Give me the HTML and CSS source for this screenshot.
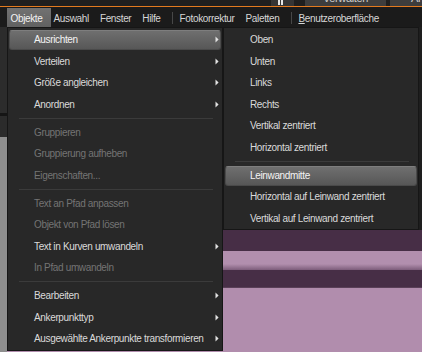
FILE: index.html
```html
<!DOCTYPE html>
<html lang="de">
<head>
<meta charset="utf-8">
<title>Objekte Menü</title>
<link rel="stylesheet" href="styles.css">
</head>
<body>
<div class="titlebar">
  <div class="tb-spacer"></div>
  <div class="tb-btn"><span class="bar"></span><span class="bar"></span></div>
  <div class="tb-tab tab-verwalten"><span>Verwalten</span></div>
  <div class="tb-tab tab-anpassen"><span>Anpassen</span></div>
</div>
<div class="accent"></div>
<nav class="menubar">
  <span class="mb-item open">Objekte</span>
  <span class="mb-item">Auswahl</span>
  <span class="mb-item">Fenster</span>
  <span class="mb-item">Hilfe</span>
  <span class="mb-sep"></span>
  <span class="mb-item">Fotokorrektur</span>
  <span class="mb-item">Paletten</span>
  <span class="mb-sep"></span>
  <span class="mb-item"><u>B</u>enutzeroberfläche</span>
</nav>
<div class="workspace">
  <div class="side">
    <div class="side-top"></div>
    <div class="side-line"></div>
    <div class="side-mid"></div>
    <div class="side-gray"></div>
  </div>
  <div class="canvas">
    <div class="canvas-top"></div>
    <div class="band-dark"></div>
    <div class="band-light"></div>
    <div class="band-dark2"></div>
    <div class="band-light2"></div>
  </div>

  <ul class="menu main">
    <li class="item active"><span class="label">Ausrichten</span><svg class="arrow" viewBox="0 0 4 7" width="4" height="7"><polygon points="0.5,0.5 3.6,3.5 0.5,6.5"/></svg></li>
    <li class="item"><span class="label">Verteilen</span><svg class="arrow" viewBox="0 0 4 7" width="4" height="7"><polygon points="0.5,0.5 3.6,3.5 0.5,6.5"/></svg></li>
    <li class="item"><span class="label">Größe angleichen</span><svg class="arrow" viewBox="0 0 4 7" width="4" height="7"><polygon points="0.5,0.5 3.6,3.5 0.5,6.5"/></svg></li>
    <li class="item"><span class="label">Anordnen</span><svg class="arrow" viewBox="0 0 4 7" width="4" height="7"><polygon points="0.5,0.5 3.6,3.5 0.5,6.5"/></svg></li>
    <li class="sep"></li>
    <li class="item disabled"><span class="label">Gruppieren</span></li>
    <li class="item disabled"><span class="label">Gruppierung aufheben</span></li>
    <li class="item disabled"><span class="label">Eigenschaften...</span></li>
    <li class="sep"></li>
    <li class="item disabled"><span class="label">Text an Pfad anpassen</span></li>
    <li class="item disabled"><span class="label">Objekt von Pfad lösen</span></li>
    <li class="item"><span class="label">Text in Kurven umwandeln</span><svg class="arrow" viewBox="0 0 4 7" width="4" height="7"><polygon points="0.5,0.5 3.6,3.5 0.5,6.5"/></svg></li>
    <li class="item disabled"><span class="label">In Pfad umwandeln</span></li>
    <li class="sep"></li>
    <li class="item"><span class="label">Bearbeiten</span><svg class="arrow" viewBox="0 0 4 7" width="4" height="7"><polygon points="0.5,0.5 3.6,3.5 0.5,6.5"/></svg></li>
    <li class="item"><span class="label">Ankerpunkttyp</span><svg class="arrow" viewBox="0 0 4 7" width="4" height="7"><polygon points="0.5,0.5 3.6,3.5 0.5,6.5"/></svg></li>
    <li class="item"><span class="label">Ausgewählte Ankerpunkte transformieren</span><svg class="arrow" viewBox="0 0 4 7" width="4" height="7"><polygon points="0.5,0.5 3.6,3.5 0.5,6.5"/></svg></li>
  </ul>

  <ul class="menu sub">
    <li class="item"><span class="label">Oben</span></li>
    <li class="item"><span class="label">Unten</span></li>
    <li class="item"><span class="label">Links</span></li>
    <li class="item"><span class="label">Rechts</span></li>
    <li class="item"><span class="label">Vertikal zentriert</span></li>
    <li class="item"><span class="label">Horizontal zentriert</span></li>
    <li class="sep"></li>
    <li class="item active"><span class="label">Leinwandmitte</span></li>
    <li class="item"><span class="label">Horizontal auf Leinwand zentriert</span></li>
    <li class="item"><span class="label">Vertikal auf Leinwand zentriert</span></li>
  </ul>
</div>
</body>
</html>
```
FILE: styles.css
```css
html, body {
  margin: 0;
  padding: 0;
}
body {
  width: 422px;
  height: 352px;
  overflow: hidden;
  background: #1e1e1e;
  font-family: "Liberation Sans", Arial, sans-serif;
  font-size: 10px;
  letter-spacing: -0.35px;
}

/* title strip */
.titlebar {
  display: flex;
  height: 6px;
  background: #1f1f1f;
  overflow: hidden;
}
.tb-spacer { flex: 1; }
.tb-btn {
  width: 23px;
  background: #353535;
  display: flex;
  gap: 1px;
  padding-left: 7px;
  box-sizing: border-box;
}
.tb-btn .bar {
  width: 2px;
  height: 5px;
  background: #e6e6e6;
}
.tb-tab {
  background: #3d3d3d;
  color: #cfcfcf;
  font-size: 11px;
  overflow: hidden;
}
.tb-tab span {
  display: block;
  line-height: 11px;
  margin-top: -7px;
  white-space: nowrap;
}
.tab-verwalten {
  width: 81px;
  margin-left: 11px;
  margin-right: 4px;
  text-align: center;
}
.tab-anpassen {
  width: 32px;
  padding-left: 21px;
  box-sizing: border-box;
}
.accent {
  height: 1px;
  background: #e27a1f;
}

/* menu bar */
.menubar {
  display: flex;
  align-items: stretch;
  height: 20px;
  box-sizing: border-box;
  padding: 1px 0 0 7px;
  background: #1b1b1b;
  color: #d6d6d6;
}
.mb-item {
  display: flex;
  align-items: center;
  padding: 1px 5.5px 0;
  white-space: nowrap;
}
.mb-item.open {
  padding: 1px 8.5px 0 3.5px;
  margin-right: -3px;
  background: linear-gradient(#727272, #616161);
  color: #f2f2f2;
}
.mb-item u { text-decoration-thickness: 1px; text-underline-offset: 1px; }
.mb-sep {
  width: 1px;
  background: #474747;
  margin: 4px 1px 3px 6px;
}

/* workspace background */
.workspace {
  position: relative;
  display: flex;
  height: 325px;
}
.side {
  width: 7px;
  display: flex;
  flex-direction: column;
}
.side-top { height: 86px; background: #2c2c2c; }
.side-line { height: 3px; background: #151515; }
.side-mid { height: 21px; background: #2b2b2b; }
.side-gray { flex: 1; background: #8e8e8e; }

.canvas {
  flex: 1;
  display: flex;
  flex-direction: column;
}
.canvas-top { height: 203px; background: #1e1e1e; }
.band-dark { height: 21px; background: #472e46; }
.band-light { height: 19px; background: linear-gradient(#b28fae 0, #b28fae 13px, #7d5d7b 19px); }
.band-dark2 { height: 18px; background: #472e46; border-bottom: 1px solid #5a4058; box-sizing: border-box; }
.band-light2 { flex: 1; background: #b18dad; }

/* menus */
.menu {
  position: absolute;
  top: 0;
  margin: 0;
  list-style: none;
  padding: 1px 1px 0;
  background: #282828;
  border: 1px solid #161616;
  box-sizing: border-box;
  color: #dadada;
}
.menu.main { left: 7px; width: 216px; }
.menu.sub { left: 223px; width: 196px; }

.item {
  position: relative;
  display: flex;
  align-items: center;
  height: 21.5px;
  padding: 0 2px 0 25px;
  white-space: nowrap;
}
.item .label {
  position: relative;
  flex: 1;
}
.item.disabled { color: #747474; }
.item.active { color: #f4f4f4; }
.item.active::before {
  content: "";
  position: absolute;
  top: 1px;
  bottom: 0.5px;
  left: 0;
  right: 0;
  background: linear-gradient(#6f6f6f, #575757);
  border: 1px solid #4a4a4a;
  border-top-color: #7e7e7e;
  border-radius: 3px;
}
.arrow {
  position: relative;
  fill: #e2e2e2;
}
.sep {
  display: flex;
  align-items: center;
  height: 6.5px;
  padding: 0 8px 0 10px;
}
.sep::after {
  content: "";
  flex: 1;
  height: 1px;
  background: #3b3b3b;
}
```
